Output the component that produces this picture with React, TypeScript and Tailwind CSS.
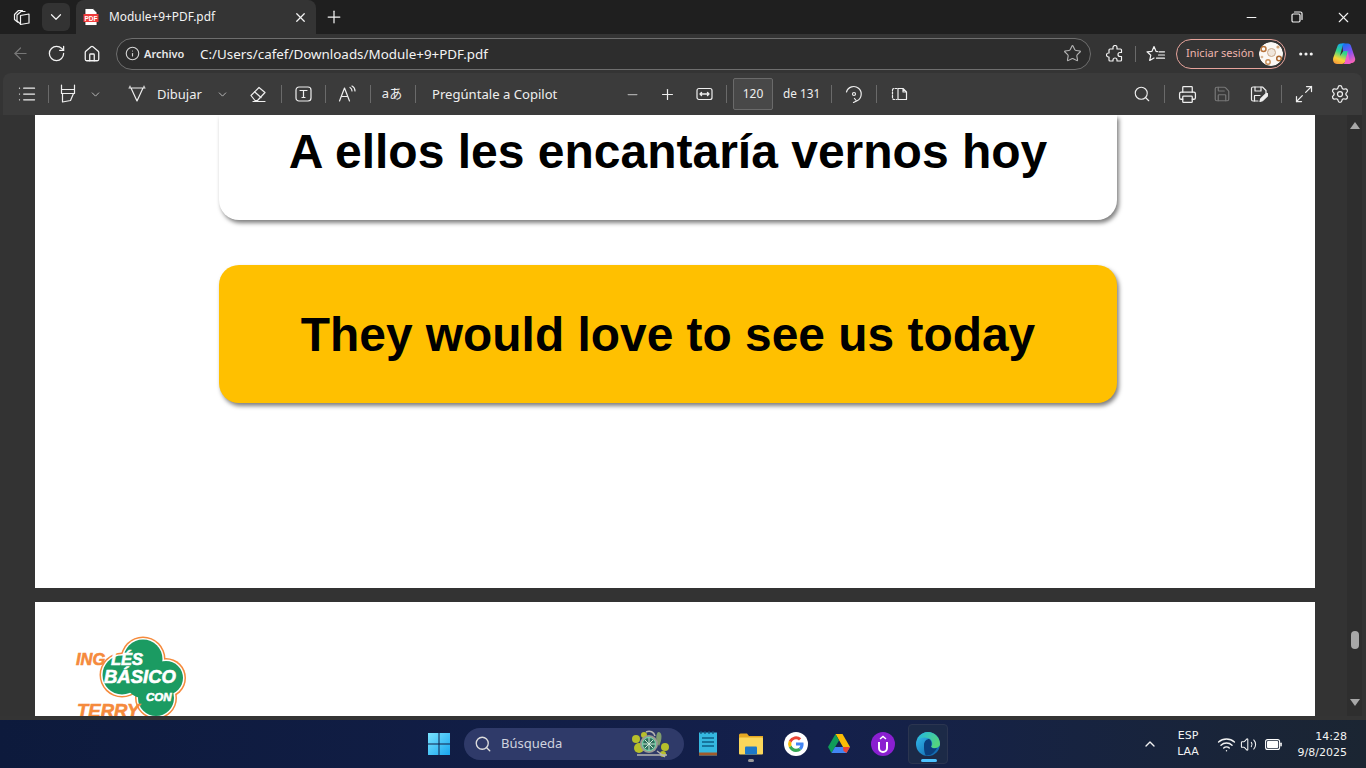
import React from 'react';
import {
  ArrowLeft, ChevronDown, ChevronUp, Ellipsis, House, Info, List, Maximize2, Minus, Plus, Printer,
  RotateCw, Save, Search, Settings, Star, Volume2, Wifi, X,
} from 'lucide-react';

const Sep = ({ className = '' }: { className?: string }) => (
  <div className={`h-[18px] w-px flex-none bg-[#6a6a6a] ${className}`} />
);

const Slot = ({ className = '', children }: { className?: string; children: React.ReactNode }) => (
  <div className={`flex flex-none items-center justify-center ${className}`}>{children}</div>
);

const line = { fill: 'none', stroke: 'currentColor', strokeWidth: 1.2, strokeLinecap: 'round', strokeLinejoin: 'round' } as const;

const Workspaces = () => (
  <svg width="18" height="18" viewBox="0 0 18 18" {...line}>
    <path d="M4.500 14 1.500 11.500V6.500L5.500 2.500h4" />
    <path d="M7 15.500 4 13V7L8 3.500h4" />
    <path d="M7.500 7.500l8.500-1.500v9l-8.500 1.500z" />
  </svg>
);

const PdfFavicon = () => (
  <svg width="16" height="18" viewBox="0 0 16 18">
    <path d="M2 0.500h8l4 4v13H2z" fill="#fff" stroke="#222" strokeWidth="0.800" />
    <rect x="0.500" y="6" width="15" height="8" fill="#ef3b3b" />
    <text x="8" y="12.500" textAnchor="middle" fontSize="6.500" fontWeight="700" fill="#fff" fontFamily="Liberation Sans, sans-serif">PDF</text>
  </svg>
);

const Restore = () => (
  <svg width="12" height="12" viewBox="0 0 12 12" {...line}>
    <rect x="1" y="3" width="8" height="8" rx="1.200" />
    <path d="M3.500 1h6a1.500 1.500 0 0 1 1.500 1.500v6" />
  </svg>
);

const Puzzle = () => (
  <svg width="18" height="18" viewBox="0 0 18 18" {...line}>
    <path d="M7 2.500a2 2 0 0 1 4 0V4h3.500a1 1 0 0 1 1 1v2.500H14a2 2 0 0 0 0 4h1.500V15a1 1 0 0 1-1 1H11v-1a2 2 0 0 0-4 0v1H4a1 1 0 0 1-1-1v-3H2.500a2 2 0 0 1 0-4H3V5a1 1 0 0 1 1-1h3z" />
  </svg>
);

const FavStar = () => (
  <svg width="20" height="18" viewBox="0 0 20 18" {...line}>
    <path d="M11.500 6.600 10 6.300 8 1.500 6 6.300 1 6.800l3.800 3.400-1.100 5.300L8 13" />
    <path d="M13 6.800h5.500M12.500 10h6M10.500 13.200h8" />
  </svg>
);

const Copilot = () => (
  <svg width="24" height="24" viewBox="0 0 24 24">
    <defs>
      <linearGradient id="cpA" x1="0.600" y1="0" x2="0.300" y2="1">
        <stop offset="0" stopColor="#159df5" />
        <stop offset="0.400" stopColor="#2fd68a" />
        <stop offset="0.750" stopColor="#f8d53a" />
        <stop offset="1" stopColor="#f79a3a" />
      </linearGradient>
      <linearGradient id="cpB" x1="0.300" y1="0" x2="0.700" y2="1">
        <stop offset="0" stopColor="#1a6ff5" />
        <stop offset="0.500" stopColor="#8a4ff2" />
        <stop offset="1" stopColor="#f765b5" />
      </linearGradient>
    </defs>
    <path d="M10 1.500h6c1.500 0 2.500 1 3 2.500l4 12c.8 2.800-1 5-3.500 5H13z" fill="url(#cpB)" />
    <path d="M9 1.500c-1.800 0-3 1-3.500 2.500L1.200 16c-.8 3 1 6 3.800 6h5c1.500 0 2.700-1 3.200-2.500L16 9h-3.500c-1 0-1.800.6-2.100 1.500L8 14l2.500-10c.3-1.200 1.200-2.500 3-2.500z" fill="url(#cpA)" />
    <path d="M16 9l-2.800 10.500c-.4 1.200-1 2-2 2.500h6c1.500 0 2.500-1 3-2.500-1.500.5-3-1-3.400-3.500z" fill="#f25ec8" />
  </svg>
);

const Avatar = () => (
  <svg width="24" height="24" viewBox="0 0 24 24" className="rounded-full">
    <circle cx="12" cy="12" r="12" fill="#fbf8f4" />
    <circle cx="12.500" cy="10.500" r="4" fill="#efe6dc" stroke="#c9a98a" strokeWidth="1" />
    <circle cx="4.500" cy="7" r="2.500" fill="none" stroke="#b8733a" strokeWidth="1.500" />
    <circle cx="20" cy="16.500" r="2.300" fill="none" stroke="#a9652e" strokeWidth="1.500" />
    <circle cx="9" cy="20" r="2.200" fill="none" stroke="#c98d55" strokeWidth="1.400" />
    <circle cx="19" cy="5" r="1.600" fill="#d3a57a" />
    <circle cx="3" cy="15" r="1.300" fill="#d9b898" />
  </svg>
);

const Highlighter = () => (
  <svg width="18" height="20" viewBox="0 0 18 20" {...line}>
    <path d="M2.500 1v4.500h13V1M2.500 5.500v4h13v-4M3.500 9.500v8.500l8-1.500 3-7" />
  </svg>
);

const DrawPen = () => (
  <svg width="18" height="18" viewBox="0 0 18 18" {...line}>
    <path d="M1 3h16M3 3l6 13 6-13M2 1.200v1.800M16 1.200v1.800" />
  </svg>
);

const Eraser = () => (
  <svg width="18" height="18" viewBox="0 0 18 18" {...line}>
    <path d="M2 10.500 10 2.500l6 5-7.500 8H6z" />
    <path d="M5.500 6.800 12 12.500M4 16.500h12" />
  </svg>
);

const TextBox = () => (
  <svg width="17" height="16" viewBox="0 0 17 16" {...line}>
    <rect x="1" y="1" width="15" height="14" rx="3" />
    <path d="M5 4.500h7M8.500 4.500v7M7 11.500h3" />
  </svg>
);

const ReadAloud = () => (
  <svg width="18" height="18" viewBox="0 0 18 18" {...line}>
    <path d="M1.500 16 6.500 3l5 13M3.300 11.500h6.400M12 2.500c1.500.8 2 2 2 3.500M14 1c2 1 3 3 3 5" />
  </svg>
);

const FitWidth = () => (
  <svg width="17" height="14" viewBox="0 0 17 14" {...line}>
    <rect x="1" y="1.500" width="15" height="11" rx="2" />
    <path d="M4 7h9M5.500 5.500 4 7l1.500 1.500M11.500 5.500 13 7l-1.500 1.500" strokeWidth="1.400" />
  </svg>
);

const Rotate = () => (
  <svg width="18" height="18" viewBox="0 0 18 18" {...line}>
    <path d="M1.500 7A7.500 7.500 0 1 1 12 15.800" />
    <circle cx="9" cy="9" r="1.500" />
    <path d="M9.500 13.500 11.500 16l-3 1.500" />
  </svg>
);

const PageView = () => (
  <svg width="17" height="14" viewBox="0 0 17 14" {...line}>
    <path d="M6 1.500H3a1.500 1.500 0 0 0-1.500 1.500v8A1.500 1.500 0 0 0 3 12.500h3" strokeDasharray="2 1.500" />
    <path d="M7 1.500h5l3.500 3.500v7.500H7zM12 1.500V5h3.500" />
  </svg>
);

const SaveAs = () => (
  <svg width="18" height="18" viewBox="0 0 18 18" {...line}>
    <path d="M8 16H3a1.500 1.500 0 0 1-1.500-1.500v-11A1.500 1.500 0 0 1 3 2h9.500L16 5.500V8" />
    <path d="M5 2v4h6V2M4.500 16v-5.500H10" />
    <path d="m10 16.500.7-2.700 5-5a1.300 1.300 0 0 1 1.900 1.900l-5 5z" fill="currentColor" />
  </svg>
);

const Logo = () => (
  <svg width="120" height="90" viewBox="70 630 120 90" className="ml-[35px] mt-[28px] block">
    <g fill="#f58a3c">
      <circle cx="143" cy="659" r="22.500" />
      <circle cx="122" cy="675" r="22.500" />
      <circle cx="166" cy="678" r="20" />
      <circle cx="156" cy="698" r="21" />
    </g>
    <g fill="#fff">
      <circle cx="143" cy="659" r="21" />
      <circle cx="122" cy="675" r="21" />
      <circle cx="166" cy="678" r="18.500" />
      <circle cx="156" cy="698" r="19.500" />
    </g>
    <g fill="#1b9b62">
      <circle cx="143" cy="659" r="19.500" />
      <circle cx="122" cy="675" r="19.500" />
      <circle cx="166" cy="678" r="17" />
      <circle cx="156" cy="698" r="18" />
      <circle cx="143" cy="680" r="18" />
    </g>
    <g fontFamily="Liberation Sans, sans-serif" fontWeight="700" fontStyle="italic" strokeWidth="0.600">
      <text x="76" y="665" fontSize="16.500" fill="#f58a3c" stroke="#f58a3c">ING</text>
      <text x="111" y="665" fontSize="16.500" fill="#fff" stroke="#fff">LÉS</text>
      <text x="104" y="683" fontSize="18.500" fill="#fff" stroke="#fff">BÁSICO</text>
      <text x="146" y="701" fontSize="11.500" fill="#fff" stroke="#fff">CON</text>
      <text x="77" y="717" fontSize="18.500" fill="#f58a3c" stroke="#f58a3c">TERRY</text>
    </g>
  </svg>
);

const SearchArt = () => (
  <svg width="44" height="30" viewBox="0 0 40 30">
    <g fill="#b7bf2b">
      <circle cx="5" cy="10" r="4" />
      <circle cx="8" cy="19" r="5" />
      <circle cx="34" cy="18" r="4" />
      <circle cx="13" cy="6" r="3" />
      <circle cx="32" cy="25" r="3" />
    </g>
    <path d="M27 3c5 0 4 8 1 14-3-4-4-10-1-14z" fill="#7f9c6d" />
    <path d="M15 3c4-2 8 0 9 4M26 22l8 6M6 26h30" stroke="#b5b5b0" strokeWidth="1.500" fill="none" />
    <circle cx="18" cy="15" r="9" fill="#9a9c92" />
    <circle cx="18" cy="15" r="6.500" fill="#2f6f5c" stroke="#6ee0b0" strokeWidth="1" />
    <path d="M18 9v12M12 15h12M14 11l8 8M22 11l-8 8" stroke="#cfe9d8" strokeWidth="1" />
  </svg>
);

const Notepad = () => (
  <svg width="20" height="26" viewBox="0 0 20 26">
    <rect x="1" y="1.500" width="18" height="23" fill="#35b8e0" />
    <rect x="1" y="21.500" width="18" height="3" fill="#a05a2c" />
    <path d="M4 7h12M4 11h12M4 15h12" stroke="#0d5f86" strokeWidth="1.500" />
    <path d="M3 0v3M7 0v3M11 0v3M15 0v3" stroke="#12507a" strokeWidth="1.200" />
  </svg>
);

const Folder = () => (
  <svg width="24" height="22" viewBox="0 0 24 22">
    <path d="M0 2a1.500 1.500 0 0 1 1.500-1.500H8L10 3h14v3H0z" fill="#e5a823" />
    <rect x="0" y="4.500" width="24" height="17" rx="1" fill="#fbd75b" />
    <rect x="6" y="13.500" width="12" height="8" rx="1" fill="#1e78c8" />
  </svg>
);

const GoogleIcon = () => (
  <svg width="24" height="24" viewBox="0 0 24 24">
    <circle cx="12" cy="12" r="12" fill="#fff" />
    <path d="M19.600 12.200c0-.6-.1-1.100-.2-1.600H12v3h4.300c-.2 1-.8 1.900-1.600 2.400l2.500 2c1.500-1.400 2.400-3.400 2.400-5.800z" fill="#4285f4" />
    <path d="M12 20c2.200 0 4-.7 5.200-2l-2.500-2c-.7.500-1.600.8-2.700.8-2.100 0-3.900-1.400-4.500-3.300l-2.600 2C6.200 18.200 8.900 20 12 20z" fill="#34a853" />
    <path d="M7.500 13.500c-.3-1-.3-2 0-3l-2.600-2a8 8 0 0 0 0 7z" fill="#fbbc05" />
    <path d="M12 7.200c1.200 0 2.200.4 3 1.200l2.200-2.200A8 8 0 0 0 4.900 8.500l2.600 2c.6-1.900 2.400-3.300 4.500-3.300z" fill="#ea4335" />
  </svg>
);

const DriveIcon = () => (
  <svg width="22" height="20" viewBox="0 0 22 20">
    <path d="M7.500 0h7L22 13h-7z" fill="#fbbc04" />
    <path d="M7.500 0 0 13l3.500 6L11 6.500z" fill="#0f9d58" />
    <path d="M3.500 19h15L22 13H7z" fill="#4285f4" />
    <path d="M15 13h7l-3.500 6-3-2z" fill="#ea4335" />
  </svg>
);

const Uphold = () => (
  <div className="flex h-[24px] w-[24px] items-center justify-center rounded-full bg-[#8a1fd0]">
    <svg width="14" height="18" viewBox="0 0 14 18" fill="none" stroke="#fff" strokeWidth="2">
      <path d="M3 7v6a4 4 0 0 0 8 0V7" />
      <path d="M4 4l3-2.500L10 4" strokeWidth="1.500" />
    </svg>
  </div>
);

const EdgeIcon = () => (
  <svg width="24" height="24" viewBox="0 0 24 24">
    <defs>
      <linearGradient id="edA" x1="0" y1="0" x2="1" y2="1">
        <stop offset="0" stopColor="#35c1f1" />
        <stop offset="1" stopColor="#0c59a4" />
      </linearGradient>
      <linearGradient id="edB" x1="0" y1="0" x2="1" y2="0.500">
        <stop offset="0" stopColor="#1fb8e6" />
        <stop offset="1" stopColor="#54d47e" />
      </linearGradient>
    </defs>
    <circle cx="12" cy="12" r="12" fill="url(#edA)" />
    <path d="M1 9C3 3 8 0 12 0c6 0 12 5 12 12 0 2.500-2.500 4-5.500 4-2 0-3.500-.6-3.500-1.500 2-1 2-7-3-8.500C7 4.500 3 6 1 9z" fill="url(#edB)" />
    <path d="M8 13c0-4 3-6 5-6 3 1 3 6 2 7.500.5 2 3 2.500 6 1.500-2 4-6 8-11 7.500C8 21 8 16 8 13z" fill="#0b3f7d" />
  </svg>
);

const BatteryIcon = () => (
  <svg width="17" height="11" viewBox="0 0 17 11">
    <rect x="0.600" y="0.600" width="14" height="9.800" rx="2" fill="none" stroke="#fff" strokeWidth="1.100" />
    <rect x="2" y="2" width="11.200" height="7" rx="1" fill="#fff" />
    <rect x="15.300" y="3.500" width="1.500" height="4" rx="0.700" fill="#fff" />
  </svg>
);

export default function App() {
  return (
    <div className="flex h-[768px] w-[1366px] flex-col overflow-hidden bg-[#343434] font-['Noto_Sans',sans-serif] text-[#f3f3f3]">
      {/* Tab strip */}
      <div className="flex h-[34px] flex-none items-center bg-[#1f1f1f]">
        <Slot className="ml-[8px] w-[28px]"><Workspaces /></Slot>
        <Slot className="ml-[6px] h-[28px] w-[28px] rounded-[6px] bg-[#333333]"><ChevronDown size={18} strokeWidth={1.600} /></Slot>
        <div className="ml-[6px] flex h-[34px] w-[240px] flex-none items-center self-end rounded-t-[8px] bg-[#343434]">
          <div className="ml-[7px] flex w-[16px] flex-none"><PdfFavicon /></div>
          <span className="ml-[10px] text-[11.900px]">Module+9+PDF.pdf</span>
          <Slot className="ml-auto mr-[8px] w-[16px]"><X size={15} strokeWidth={2} /></Slot>
        </div>
        <Slot className="ml-[6px] w-[24px]"><Plus size={20} strokeWidth={1.500} /></Slot>
        <Slot className="ml-auto w-[46px]"><Minus size={15} strokeWidth={1.800} /></Slot>
        <Slot className="w-[46px]"><Restore /></Slot>
        <Slot className="w-[46px]"><X size={17} strokeWidth={1.600} /></Slot>
      </div>

      {/* Address row */}
      <div className="flex h-[39px] flex-none items-center bg-[#343434]">
        <Slot className="ml-[2px] w-[36px] text-[#777777]"><ArrowLeft size={19} strokeWidth={1.500} /></Slot>
        <Slot className="w-[36px]"><RotateCw size={19} strokeWidth={1.600} /></Slot>
        <Slot className="w-[36px]"><House size={18} strokeWidth={1.700} /></Slot>
        <div className="ml-[6px] flex h-[32px] w-[975px] flex-none items-center rounded-full border border-[#6e6e6e] bg-[#2d2d2d]">
          <Slot className="ml-[8px] w-[15px] text-[#d5d5d5]"><Info size={15} strokeWidth={1.800} /></Slot>
          <span className="ml-[4px] w-[56px] flex-none pt-px text-[11px] font-semibold text-[#e8e8e8]">Archivo</span>
          <span className="pt-px text-[13.400px]">C:/Users/cafef/Downloads/Module+9+PDF.pdf</span>
          <Slot className="ml-auto mr-[8px] w-[20px] text-[#b5b5b5]"><Star size={19} strokeWidth={1.400} /></Slot>
        </div>
        <Slot className="ml-[6px] w-[36px]"><Puzzle /></Slot>
        <Sep className="ml-[2px] !h-[16px]" />
        <Slot className="ml-[8px] w-[24px]"><FavStar /></Slot>
        <div className="ml-[8px] flex h-[30px] w-[110px] flex-none items-center rounded-full border border-[#e6a39b] pl-[9px] pr-[2px]">
          <span className="text-[11px] text-[#eeb5ad]">Iniciar sesión</span>
          <div className="ml-auto flex"><Avatar /></div>
        </div>
        <Slot className="ml-[6px] w-[28px]"><Ellipsis size={18} strokeWidth={2.200} /></Slot>
        <Slot className="ml-[9px] w-[30px]"><Copilot /></Slot>
      </div>

      {/* PDF toolbar */}
      <div className="mx-[3px] flex h-[42px] w-[1359px] flex-none items-center rounded-t-[8px] bg-[#3b3b3b] text-[#eeeeee]">
        <Slot className="ml-[6px] w-[36px]"><List size={20} strokeWidth={1.500} /></Slot>
        <Sep className="ml-[3px]" />
        <Slot className="ml-[5px] w-[28px]"><Highlighter /></Slot>
        <Slot className="ml-[5px] w-[16px] text-[#b8b8b8]"><ChevronDown size={13} strokeWidth={1.800} /></Slot>
        <Slot className="ml-[22px] w-[24px]"><DrawPen /></Slot>
        <span className="ml-[8px] w-[46px] flex-none pt-px text-[13px]">Dibujar</span>
        <Slot className="ml-[11px] w-[16px] text-[#b8b8b8]"><ChevronDown size={13} strokeWidth={1.800} /></Slot>
        <Slot className="ml-[16px] w-[24px]"><Eraser /></Slot>
        <Sep className="ml-[11px]" />
        <Slot className="ml-[9px] w-[24px]"><TextBox /></Slot>
        <Sep className="ml-[10px]" />
        <Slot className="ml-[9px] w-[24px]"><ReadAloud /></Slot>
        <Sep className="ml-[11px]" />
        <Slot className="ml-[9px] w-[24px] whitespace-nowrap font-['Noto_Sans','Noto_Sans_CJK_JP',sans-serif] text-[13px]">aあ</Slot>
        <Sep className="ml-[11px]" />
        <span className="ml-[16px] w-[126px] flex-none whitespace-nowrap pt-px text-[13.100px]">Pregúntale a Copilot</span>
        <Slot className="ml-[62px] w-[24px] text-[#a8a8a8]"><Minus size={15} strokeWidth={2} /></Slot>
        <Slot className="ml-[11px] w-[24px]"><Plus size={17} strokeWidth={1.700} /></Slot>
        <Slot className="ml-[13px] w-[24px]"><FitWidth /></Slot>
        <Sep className="ml-[10px]" />
        <div className="ml-[6px] flex h-[32px] w-[40px] flex-none items-center justify-center rounded-[2px] border border-[#6a6a6a] bg-[#484848] text-[12px]">120</div>
        <span className="ml-[10px] w-[38px] flex-none whitespace-nowrap text-[11.800px]">de 131</span>
        <Sep className="ml-[10px]" />
        <Slot className="ml-[10px] w-[24px]"><Rotate /></Slot>
        <Sep className="ml-[10px]" />
        <Slot className="ml-[10px] w-[24px]"><PageView /></Slot>
        <Slot className="ml-auto w-[24px]"><Search size={18} strokeWidth={1.500} /></Slot>
        <Sep className="ml-[10px]" />
        <Slot className="ml-[10px] w-[24px]"><Printer size={19} strokeWidth={1.600} /></Slot>
        <Slot className="ml-[11px] w-[24px] text-[#777777]"><Save size={18} strokeWidth={1.600} /></Slot>
        <Slot className="ml-[13px] w-[24px]"><SaveAs /></Slot>
        <Sep className="ml-[10px]" />
        <Slot className="ml-[10px] w-[24px]"><Maximize2 size={20} strokeWidth={1.500} /></Slot>
        <Slot className="ml-[12px] mr-[10px] w-[24px]"><Settings size={20} strokeWidth={1.500} /></Slot>
      </div>

      {/* PDF viewer */}
      <div className="flex h-[601px] flex-none overflow-hidden bg-[#333333]">
        <div className="ml-[35px] flex w-[1280px] flex-none flex-col font-['Liberation_Sans',sans-serif] text-black">
          <div className="h-[473px] flex-none bg-white pl-[184px]">
            <div className="flex h-[105px] w-[898px] items-center justify-center rounded-b-[20px] bg-white pb-[31px] text-[48px] font-bold leading-none shadow-[2px_3px_4px_rgba(0,0,0,0.5)]">
              A ellos les encantaría vernos hoy
            </div>
            <div className="mt-[45px] flex h-[138px] w-[898px] items-center justify-center rounded-[20px] bg-[#ffc000] pt-[2px] text-[47.900px] font-bold leading-none shadow-[2px_3px_4px_rgba(0,0,0,0.5)]">
              They would love to see us today
            </div>
          </div>
          <div className="mt-[14px] h-[114px] flex-none overflow-hidden bg-white">
            <Logo />
          </div>
        </div>
        <div className="ml-[32px] flex h-[601px] w-[15px] flex-none flex-col items-center bg-[#2e2e2e] pt-[7px]">
          <div className="h-0 w-0 border-x-[5px] border-b-[7px] border-x-transparent border-b-[#a8a8a8]" />
          <div className="mt-[502px] h-[18px] w-[8px] rounded-full bg-[#a8a8a8]" />
          <div className="mt-[50px] h-0 w-0 border-x-[5px] border-t-[7px] border-x-transparent border-t-[#a8a8a8]" />
        </div>
      </div>
      <div className="h-[4px] flex-none bg-[#343434]" />

      {/* Taskbar */}
      <div className="flex h-[48px] flex-none items-center bg-gradient-to-r from-[#0d1a3c] via-[#14204c] via-60% to-[#1b2532]">
        <svg width="24" height="24" viewBox="0 0 24 24" className="ml-[427px] flex-none">
          <defs>
            <linearGradient id="winG" x1="0" y1="0" x2="1" y2="1">
              <stop offset="0" stopColor="#7ae3ff" />
              <stop offset="1" stopColor="#18a6ee" />
            </linearGradient>
          </defs>
          <path d="M1 1h10.500v10.500H1zM12.500 1H23v10.500H12.500zM1 12.500h10.500V23H1zM12.500 12.500H23V23H12.500z" fill="url(#winG)" />
        </svg>
        <div className="ml-[13px] flex h-[32px] w-[220px] flex-none items-center rounded-full bg-[#2f3a69]">
          <Slot className="ml-[10px] w-[18px] text-[#dddddd]"><Search size={18} strokeWidth={1.800} /></Slot>
          <span className="ml-[9px] text-[13px] text-[#cfd3df]">Búsqueda</span>
          <div className="ml-auto mr-[11px] flex"><SearchArt /></div>
        </div>
        <Slot className="ml-[14px] w-[20px]"><Notepad /></Slot>
        <div className="relative ml-[21px] flex w-[24px] flex-none">
          <Folder />
          <div className="absolute -bottom-[7px] left-[9px] h-[3px] w-[6px] rounded-full bg-[#9a9a9a]" />
        </div>
        <Slot className="ml-[21px] w-[24px]"><GoogleIcon /></Slot>
        <Slot className="ml-[19px] w-[24px]"><DriveIcon /></Slot>
        <Slot className="ml-[20px] w-[24px]"><Uphold /></Slot>
        <div className="relative ml-[13px] flex h-[40px] w-[40px] flex-none items-center justify-center rounded-[4px] border border-[#2b3550] bg-[#1c2a47]">
          <EdgeIcon />
          <div className="absolute bottom-[1px] left-[12px] h-[3px] w-[16px] rounded-full bg-[#4cc2ff]" />
        </div>
        <Slot className="ml-[194px] w-[16px]"><ChevronUp size={18} strokeWidth={2} /></Slot>
        <div className="ml-[8px] w-[44px] flex-none text-center font-['DejaVu_Sans',sans-serif] text-[11px] leading-[16px]">
          <div>ESP</div>
          <div>LAA</div>
        </div>
        <Slot className="ml-[6px] w-[20px]"><Wifi size={19} strokeWidth={1.800} /></Slot>
        <Slot className="ml-[2px] w-[20px]"><Volume2 size={17} strokeWidth={1.500} /></Slot>
        <Slot className="ml-[6px] w-[18px]"><BatteryIcon /></Slot>
        <div className="ml-[1px] w-[64px] flex-none pt-px text-right font-['DejaVu_Sans',sans-serif] text-[11px] leading-[16px]">
          <div>14:28</div>
          <div className="whitespace-nowrap">9/8/2025</div>
        </div>
      </div>
    </div>
  );
}
